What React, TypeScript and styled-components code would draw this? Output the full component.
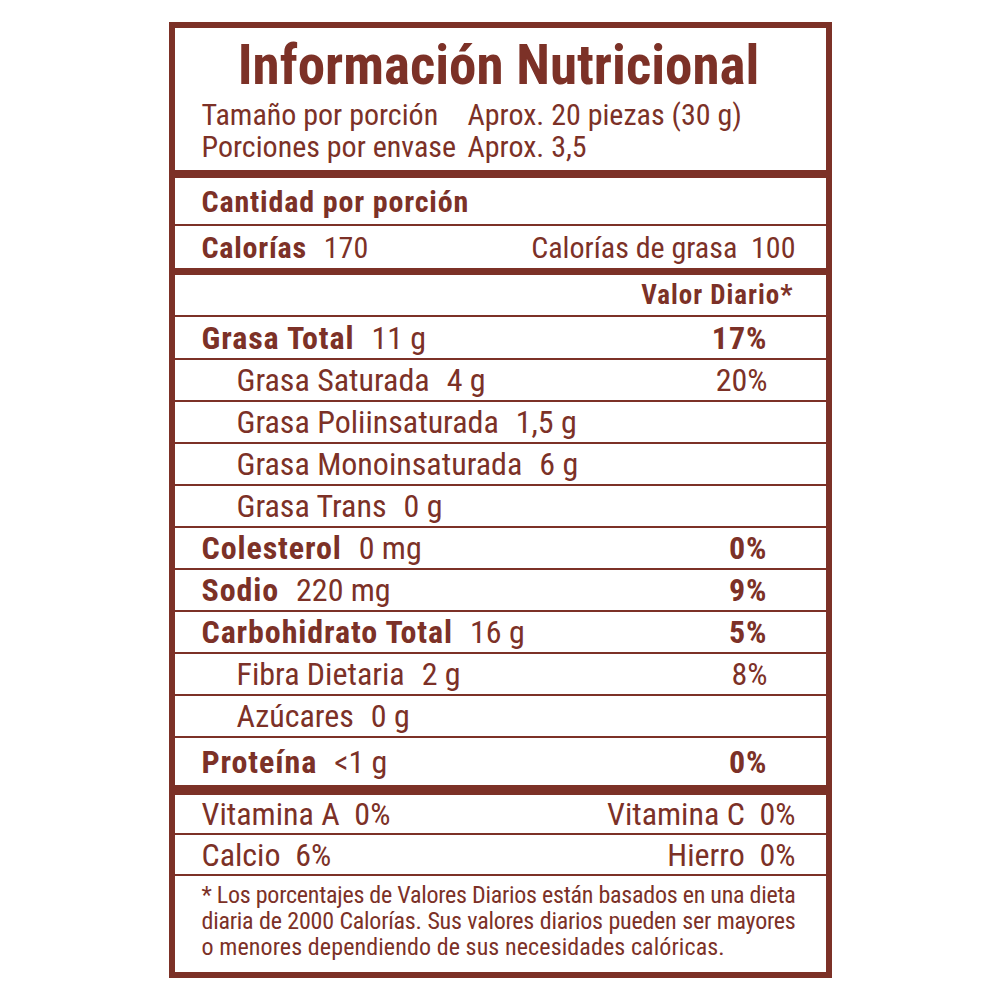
import React from "react";
import styled, {createGlobalStyle} from "styled-components";

const ink = "#7c3127";
const font = `Roboto, "Liberation Sans", sans-serif`;

const GlobalStyle = createGlobalStyle`
  html, body {
    margin: 0;
    padding: 0;
    background: #fff;
  }
  body {
    font-family: ${font};
    font-stretch: 75%;
    color: ${ink};
  }
`;

const Page = styled.div`
  display: flex;
  justify-content: center;
  padding-top: 22px;
`;

const Label = styled.div`
  width: 663px;
  box-sizing: border-box;
  border: 6px solid ${ink};
  display: flex;
  flex-direction: column;
`;

const Header = styled.div`
  height: 142px;
  box-sizing: border-box;
  padding: 8px 30px 0 27px;
`;

const Title = styled.h1`
  margin: 0;
  text-align: center;
  font-size: 55px;
  line-height: 58px;
  font-weight: 700;
  white-space: nowrap;
`;

const Info = styled.div`
  display: grid;
  grid-template-columns: 266px auto;
  margin-top: 5px;
  font-size: 30px;
  line-height: 32px;
  white-space: nowrap;
`;

const Rule = styled.div<{ $h: number }>`
  height: ${p => p.$h}px;
  background: ${ink};
  flex: none;
`;

const Row = styled.div<{ $h: number; $line?: boolean; $size?: number }>`
  height: ${p => p.$h}px;
  flex: none;
  display: flex;
  align-items: center;
  padding: 0 30px 0 27px;
  border-bottom: ${p => (p.$line ? `2px solid ${ink}` : "none")};
  font-size: ${p => p.$size ?? 32}px;
  white-space: nowrap;
`;

const Name = styled.span<{ $bold?: boolean; $indent?: boolean; $track?: number }>`
  font-weight: ${p => (p.$bold ? 700 : 400)};
  letter-spacing: ${p => p.$track ?? 0}px;
  padding-left: ${p => (p.$indent ? 35 : 0)}px;
`;

const Amount = styled.span<{ $gap?: number }>`
  margin-left: ${p => p.$gap ?? 17}px;
`;

const Right = styled.span`
  margin-left: auto;
`;

const Pct = styled.span<{ $bold?: boolean }>`
  margin-left: auto;
  margin-right: 28px;
  font-weight: ${p => (p.$bold ? 700 : 400)};
  letter-spacing: ${p => (p.$bold ? 1 : 0)}px;
`;

const DailyHead = styled.span`
  margin-left: auto;
  margin-right: 2px;
  font-size: 27px;
  font-weight: 700;
  letter-spacing: 1px;
`;

const Footnote = styled.div`
  height: 96px;
  box-sizing: border-box;
  padding: 6px 30px 0 27px;
  font-size: 24px;
  line-height: 26px;
`;

const FootLine = styled.div<{ $last?: boolean }>`
  white-space: nowrap;
  letter-spacing: ${p => (p.$last ? 0.1 : -0.25)}px;
  text-align: ${p => (p.$last ? "left" : "justify")};
  text-align-last: ${p => (p.$last ? "left" : "justify")};
`;

type Nutrient = {
    name: string;
    amount: string;
    pct?: string;
    bold?: boolean;
};

const nutrients: Nutrient[] = [
    {name: "Grasa Total", amount: "11 g", pct: "17%", bold: true},
    {name: "Grasa Saturada", amount: "4 g", pct: "20%"},
    {name: "Grasa Poliinsaturada", amount: "1,5 g"},
    {name: "Grasa Monoinsaturada", amount: "6 g"},
    {name: "Grasa Trans", amount: "0 g"},
    {name: "Colesterol", amount: "0 mg", pct: "0%", bold: true},
    {name: "Sodio", amount: "220 mg", pct: "9%", bold: true},
    {name: "Carbohidrato Total", amount: "16 g", pct: "5%", bold: true},
    {name: "Fibra Dietaria", amount: "2 g", pct: "8%"},
    {name: "Azúcares", amount: "0 g"},
];

const App: React.FC = () => {
    return (
        <>
            <GlobalStyle/>
            <Page>
                <Label>
                    <Header>
                        <Title>Información Nutricional</Title>
                        <Info>
                            <span>Tamaño por porción</span>
                            <span>Aprox. 20 piezas (30 g)</span>
                            <span>Porciones por envase</span>
                            <span>Aprox. 3,5</span>
                        </Info>
                    </Header>
                    <Rule $h={8}/>
                    <Row $h={46} $line $size={30}>
                        <Name $bold $track={0.85}>Cantidad por porción</Name>
                    </Row>
                    <Row $h={42} $size={30}>
                        <Name $bold $track={0.75}>Calorías</Name>
                        <Amount>170</Amount>
                        <Right>Calorías de grasa&nbsp; 100</Right>
                    </Row>
                    <Rule $h={7}/>
                    <Row $h={40} $line>
                        <DailyHead>Valor Diario*</DailyHead>
                    </Row>
                    {nutrients.map((n, i) => (
                        <Row key={n.name} $h={i === 0 ? 41 : 40} $line>
                            <Name $bold={n.bold} $indent={!n.bold} $track={n.bold ? 0.9 : 0}>{n.name}</Name>
                            <Amount>{n.amount}</Amount>
                            {n.pct && <Pct $bold={n.bold}>{n.pct}</Pct>}
                        </Row>
                    ))}
                    <Row $h={47}>
                        <Name $bold $track={0.9}>Proteína</Name>
                        <Amount>&lt;1 g</Amount>
                        <Pct $bold>0%</Pct>
                    </Row>
                    <Rule $h={10}/>
                    <Row $h={38} $line>
                        <Name>Vitamina A&nbsp; 0%</Name>
                        <Right>Vitamina C&nbsp; 0%</Right>
                    </Row>
                    <Row $h={39} $line>
                        <Name>Calcio&nbsp; 6%</Name>
                        <Right>Hierro&nbsp; 0%</Right>
                    </Row>
                    <Footnote>
                        <FootLine>* Los porcentajes de Valores Diarios están basados en una dieta</FootLine>
                        <FootLine>diaria de 2000 Calorías. Sus valores diarios pueden ser mayores</FootLine>
                        <FootLine $last>o menores dependiendo de sus necesidades calóricas.</FootLine>
                    </Footnote>
                </Label>
            </Page>
        </>
    );
};

export default App;
